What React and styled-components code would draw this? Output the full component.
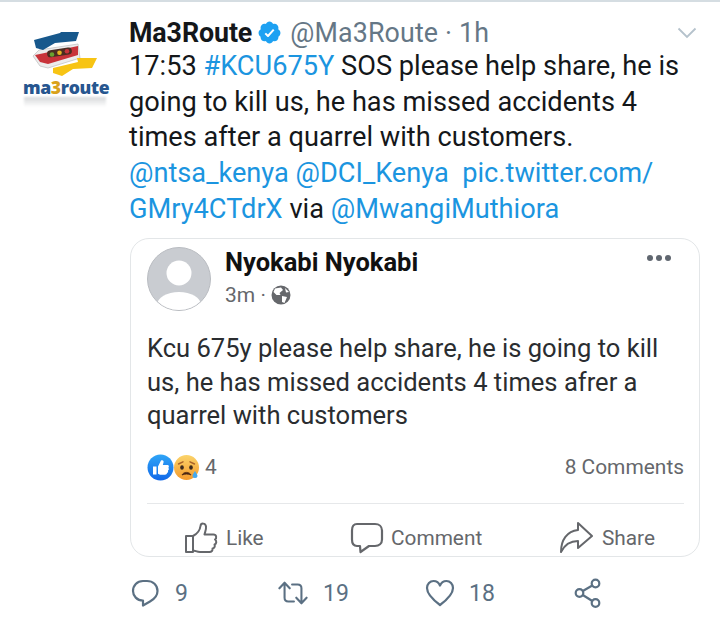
import React from "react";
import styled, { createGlobalStyle } from "styled-components";

const Global = createGlobalStyle`
  html, body { margin: 0; padding: 0; background: #fff; }
  body { font-family: Roboto, "Liberation Sans", sans-serif; }
  #root { width: 720px; height: 617px; overflow: hidden; }
`;

const Page = styled.div`
  width: 720px;
  height: 617px;
  box-sizing: border-box;
  border-top: 2px solid #d5dde2;
  display: flex;
  overflow: hidden;
`;
const LogoCol = styled.div`
  width: 130px;
  flex: none;
  padding: 28px 0 0 22px;
  box-sizing: border-box;
`;
const LogoMark = styled.svg`
  display: block;
  width: 80px;
  height: 48px;
  margin-left: 1px;
`;
const LogoWord = styled.div`
  font: 800 17.6px/18px "Open Sans", sans-serif;
  color: #27568f;
  letter-spacing: -0.35px;
  padding-left: 1px;
  white-space: nowrap;
  span { color: #d9a21b; }
`;
const LogoReflection = styled.div`
  width: 82px;
  height: 10px;
  margin: 1px 0 0 2px;
  background: linear-gradient(#d6d8da, rgba(255, 255, 255, 0));
  filter: blur(1.2px);
`;
const Main = styled.div`
  width: 570px;
  flex: none;
  display: flex;
  flex-direction: column;
`;
const Head = styled.div`
  display: flex;
  align-items: center;
  height: 33px;
  margin: 14px 0 0 -1px;
  font-size: 26.8px;
`;
const Name = styled.span`
  font-weight: 700;
  color: #14171a;
  letter-spacing: -0.1px;
`;
const Verified = styled.svg`
  width: 25px;
  height: 25px;
  margin: 0 8px 0 5px;
`;
const Handle = styled.span`
  color: #657786;
  letter-spacing: 0.15px;
`;
const Chevron = styled.svg`
  width: 20px;
  height: 12px;
  margin-left: auto;
  margin-right: 3px;
`;
const Body = styled.p`
  margin: 0 0 0 -1px;
  font-size: 27.2px;
  line-height: 35.7px;
  color: #14171a;
  white-space: nowrap;
`;
const Link = styled.span`
  color: #1b95e0;
`;
const Card = styled.div`
  margin-top: 10.5px;
  width: 570px;
  height: 319px;
  box-sizing: border-box;
  border: 1px solid #e3e6e8;
  border-radius: 19px;
  padding: 8px 15px 0 16px;
  display: flex;
  flex-direction: column;
  overflow: hidden;
`;
const PostHead = styled.div`
  display: flex;
`;
const Avatar = styled.svg`
  width: 64px;
  height: 64px;
  flex: none;
`;
const PostMeta = styled.div`
  margin-left: 14px;
  flex: 1;
`;
const PostName = styled.div`
  font-size: 25.5px;
  font-weight: 700;
  line-height: 30px;
  color: #111;
`;
const PostSub = styled.div`
  display: flex;
  align-items: center;
  gap: 5px;
  margin-top: 5px;
  font-size: 21px;
  line-height: 26px;
  color: #65676b;
`;
const Dots = styled.svg`
  width: 26px;
  height: 8px;
  flex: none;
  margin: 7px 12px 0 0;
`;
const PostText = styled.p`
  margin: 21px 0 0;
  font-size: 25.55px;
  line-height: 33.5px;
  color: #2a2d30;
  white-space: nowrap;
`;
const Stats = styled.div`
  display: flex;
  align-items: center;
  margin-top: 17.5px;
  height: 34px;
  font-size: 20.9px;
  color: #65676b;
`;
const Reaction = styled.svg`
  width: 27px;
  height: 27px;
  margin-right: ${(p) => p.$gap}px;
`;
const CommentCount = styled.span`
  margin-left: auto;
`;
const Rule = styled.div`
  height: 1px;
  background: #e6e8ea;
  margin-top: 19px;
  flex: none;
`;
const Actions = styled.div`
  display: flex;
  align-items: center;
  font-size: 20.8px;
  color: #65676b;
  padding: 17px 0 0 37px;
`;
const Action = styled.div`
  display: flex;
  align-items: center;
  gap: ${(p) => p.$gap}px;
  width: ${(p) => p.$w}px;
`;
const ActionIcon = styled.svg`
  width: 34px;
  height: 34px;
  flex: none;
`;
const Footer = styled.div`
  display: flex;
  align-items: center;
  height: 34px;
  margin-top: 19px;
  font-size: 23px;
  color: #5b7083;
`;
const FootItem = styled.div`
  display: flex;
  align-items: center;
  gap: ${(p) => p.$gap}px;
  width: ${(p) => p.$w}px;
  flex: none;
`;
const FootIcon = styled.svg`
  width: 30px;
  height: 30px;
  flex: none;
  fill: none;
  stroke: #5b7083;
  stroke-width: 2.2;
  stroke-linecap: round;
  stroke-linejoin: round;
`;

export default function App() {
  return (
    <Page>
      <Global />
      <LogoCol>
        <LogoMark viewBox="0 0 80 48">
          <path d="M10 26 L16 20 L55 14 L57 28 L25 38 L17 36 Z" fill="#ececec" stroke="#c4c4c4" strokeWidth="0.8" />
          <path d="M11 10 L37 3 L38 2 L56 2 L53 11 L32 13 L20 20 L13 18 Z" fill="#17588c" />
          <path d="M12 25 L55 16 L55 25 L25 34 L17 32 Z" fill="#c8333a" />
          <rect x="24" y="19" width="25" height="7" rx="3.5" transform="rotate(-9 36 22.5)" fill="#4b2d22" />
          <circle cx="29" cy="24.5" r="2.3" fill="#6aa32f" />
          <circle cx="36.5" cy="22.8" r="2.3" fill="#e6b422" />
          <circle cx="44" cy="21.3" r="2.3" fill="#c8333a" />
          <path d="M30 38 L55 32 L54 28 L74 28 L69 38 L50 39 L39 46 L30 43 Z" fill="#f7c414" />
        </LogoMark>
        <LogoWord>ma<span>3</span>route</LogoWord>
        <LogoReflection />
      </LogoCol>
      <Main>
        <Head>
          <Name>Ma3Route</Name>
          <Verified viewBox="0 0 24 24">
            <path fill="#1da1f2" d="M22.5 12.5c0-1.58-.875-2.95-2.148-3.6.154-.435.238-.905.238-1.4 0-2.21-1.71-3.998-3.818-3.998-.47 0-.92.084-1.336.25C14.818 2.415 13.51 1.5 12 1.5s-2.816.917-3.437 2.25c-.415-.165-.866-.25-1.336-.25-2.11 0-3.818 1.79-3.818 4 0 .494.083.964.237 1.4-1.272.65-2.147 2.018-2.147 3.6 0 1.495.782 2.798 1.942 3.486-.02.17-.032.34-.032.514 0 2.21 1.708 4 3.818 4 .47 0 .92-.086 1.335-.25.62 1.334 1.926 2.25 3.437 2.25 1.512 0 2.818-.916 3.437-2.25.415.163.865.248 1.336.248 2.11 0 3.818-1.79 3.818-4 0-.174-.012-.344-.033-.513 1.158-.687 1.943-1.99 1.943-3.484z" />
            <path fill="#fff" d="M10.54 16.4c-.25 0-.5-.1-.68-.28l-2.6-2.6 1.36-1.36 1.86 1.86 4.86-5.36 1.42 1.28-5.5 6.15c-.18.2-.43.31-.7.31z" />
          </Verified>
          <Handle>@Ma3Route · 1h</Handle>
          <Chevron viewBox="0 0 20 12">
            <path d="M1.5 1.5 L10 10 L18.5 1.5" fill="none" stroke="#b5c2cc" strokeWidth="1.8" />
          </Chevron>
        </Head>
        <Body>
          17:53 <Link>#KCU675Y</Link> SOS please help share, he is<br />
          going to kill us, he has missed accidents 4<br />
          times after a quarrel with customers.<br />
          <Link>@ntsa_kenya @DCI_Kenya &nbsp;pic.twitter.com/</Link><br />
          <Link>GMry4CTdrX</Link> via <Link>@MwangiMuthiora</Link>
        </Body>
        <Card>
          <PostHead>
            <Avatar viewBox="0 0 64 64">
              <defs>
                <clipPath id="av"><circle cx="32" cy="32" r="31" /></clipPath>
              </defs>
              <circle cx="32" cy="32" r="31.5" fill="#c9ccd1" stroke="#b9bcc1" />
              <g clipPath="url(#av)" fill="#fff">
                <circle cx="32" cy="26" r="12.5" />
                <ellipse cx="32" cy="58" rx="22" ry="13" />
              </g>
            </Avatar>
            <PostMeta>
              <PostName>Nyokabi Nyokabi</PostName>
              <PostSub>
                3m ·
                <svg width="20" height="20" viewBox="0 0 20 20">
                  <circle cx="10" cy="10" r="9.5" fill="#65676b" />
                  <path d="M4 3.5 L10 2.5 L12 5 L8.5 8 L9.5 10 L5.5 10 L2.5 7 Z M11 11 L16 12 L13.5 18 L11 17 Z M14 3 L18 7 L15 7.5 Z" fill="#fff" />
                </svg>
              </PostSub>
            </PostMeta>
            <Dots viewBox="0 0 26 8">
              <circle cx="4" cy="4" r="3" fill="#606770" />
              <circle cx="13" cy="4" r="3" fill="#606770" />
              <circle cx="22" cy="4" r="3" fill="#606770" />
            </Dots>
          </PostHead>
          <PostText>
            Kcu 675y please help share, he is going to kill<br />
            us, he has missed accidents 4 times afrer a<br />
            quarrel with customers
          </PostText>
          <Stats>
            <Reaction viewBox="0 0 27 27" $gap={-1}>
              <defs>
                <linearGradient id="lk" x1="0" y1="0" x2="0" y2="1">
                  <stop offset="0" stopColor="#2fa5f7" />
                  <stop offset="1" stopColor="#1168e8" />
                </linearGradient>
              </defs>
              <circle cx="13.5" cy="13.5" r="13" fill="url(#lk)" />
              <path d="M6 12.5h3.5v8H6z M11 12.5 L14 6.5 C16 5.5 17 7 16.5 8.5 L15.8 11 H20.5 C22 11 22.3 13 21.4 13.8 C22.3 15 21.8 16.2 21 16.6 C21.4 18 20.8 18.8 20 19.1 C20 20.4 19 20.8 18 20.8 H13 L11 19.8 Z" fill="#fff" />
            </Reaction>
            <Reaction viewBox="0 0 27 27" $gap={5}>
              <defs>
                <linearGradient id="sd" x1="0" y1="0" x2="0" y2="1">
                  <stop offset="0" stopColor="#fbd46b" />
                  <stop offset="1" stopColor="#f49a2c" />
                </linearGradient>
              </defs>
              <circle cx="13.5" cy="13.5" r="12.5" fill="url(#sd)" />
              <ellipse cx="9" cy="13.5" rx="1.8" ry="2.2" fill="#3c2a1e" />
              <ellipse cx="18" cy="13.5" rx="1.8" ry="2.2" fill="#3c2a1e" />
              <path d="M5.5 10 L10 7.8 M21.5 10 L17 7.8" stroke="#a8622a" strokeWidth="1.4" fill="none" strokeLinecap="round" />
              <path d="M9 21 C10.5 17.5 16.5 17.5 18 21 C15.5 19.8 11.5 19.8 9 21 Z" fill="#4a2613" stroke="#4a2613" strokeWidth="0.8" />
              <path d="M22 17 C23.5 19.5 24.5 20.5 24.5 22.2 A2.6 2.6 0 0 1 19.5 22.2 C19.5 20.5 20.7 19.3 22 17 Z" fill="#45a9ee" />
            </Reaction>
            <span>4</span>
            <CommentCount>8 Comments</CommentCount>
          </Stats>
          <Rule />
          <Actions>
            <Action $w={166} $gap={8}>
              <ActionIcon viewBox="0 0 34 34" fill="none" stroke="#65676b" strokeWidth="2" strokeLinejoin="round" strokeLinecap="round">
                <path d="M2 15h7v16H2z" />
                <path d="M9 15 C13 13 16 9 16.5 5 C17 1.5 21.5 2 22 5.5 C22.4 8.5 21 11 20.5 13.5 H29.5 C32.5 13.5 33 17 31 18.5 C33 20 32.5 23 30.5 23.5 C31.5 25.5 30 27.5 28.5 27.5 C29 29.5 27.5 31 25.5 31 H16 C13 31 11 29.5 9 29.5" />
              </ActionIcon>
              <span>Like</span>
            </Action>
            <Action $w={209} $gap={7}>
              <ActionIcon viewBox="0 0 34 34" fill="none" stroke="#65676b" strokeWidth="2.2" strokeLinejoin="round">
                <path d="M7 3 H25 C29 3 32 5.5 32 9.5 V18.5 C32 22.5 29 25 25 25 H19 L10.5 31 L10 25 H7 C4 25 2 22.5 2 18.5 V9.5 C2 5.5 4 3 7 3 Z" />
              </ActionIcon>
              <span>Comment</span>
            </Action>
            <Action $w={110} $gap={9}>
              <ActionIcon viewBox="0 0 34 34" fill="none" stroke="#65676b" strokeWidth="2" strokeLinejoin="round" strokeLinecap="round">
                <path d="M19 2 L33 15 L19 27 V20 C12 20 6 23 2 31 C2 19 8 10 19 9 Z" />
              </ActionIcon>
              <span>Share</span>
            </Action>
          </Actions>
        </Card>
        <Footer>
          <FootItem $w={148} $gap={15}>
            <FootIcon viewBox="0 0 30 30">
              <path d="M13 3 H17 C23 3 27.5 7 27.5 13 C27.5 18 24.5 21 20 23.5 L13 27.5 V22.5 C7 22.5 3 18 3 13 C3 7.5 7 3 13 3 Z" />
            </FootIcon>
            <span>9</span>
          </FootItem>
          <FootItem $w={147} $gap={15}>
            <FootIcon viewBox="0 0 32 30">
              <path d="M1.5 10 L7 4 L12.5 10 M7 4.5 V20 C7 22.5 8.5 24 11 24 H17 M30.5 20 L25 26 L19.5 20 M25 25.5 V10 C25 7.5 23.5 6 21 6 H15" />
            </FootIcon>
            <span>19</span>
          </FootItem>
          <FootItem $w={149} $gap={14}>
            <FootIcon viewBox="0 0 30 30">
              <path d="M15 27 C7 21 2 16 2 10 C2 6 5 3 8.5 3 C11.5 3 13.8 4.5 15 7.5 C16.2 4.5 18.5 3 21.5 3 C25 3 28 6 28 10 C28 16 23 21 15 27 Z" />
            </FootIcon>
            <span>18</span>
          </FootItem>
          <FootItem $w={30} $gap={0}>
            <FootIcon viewBox="0 0 30 30">
              <circle cx="21.5" cy="5.5" r="3.8" />
              <circle cx="21.5" cy="25" r="3.8" />
              <circle cx="5.5" cy="15" r="3.8" />
              <path d="M8.8 13 L18.3 7.5 M8.8 17 L18.3 23" />
            </FootIcon>
          </FootItem>
        </Footer>
      </Main>
    </Page>
  );
}
